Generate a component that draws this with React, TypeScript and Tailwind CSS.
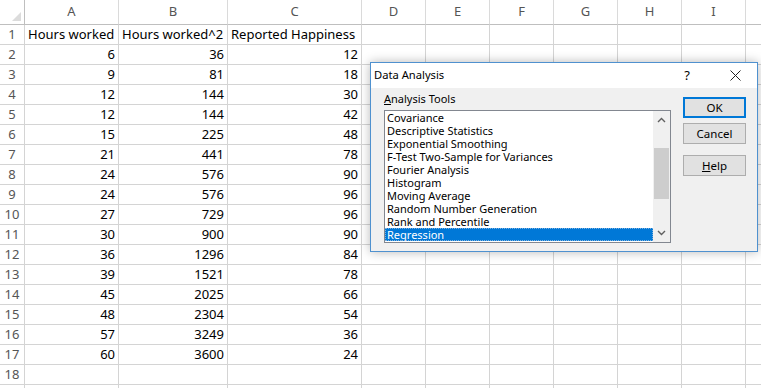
const widths = ['w-[94px]', 'w-[109px]', 'w-[134px]', 'w-[64px]', 'w-[64px]', 'w-[64px]', 'w-[64px]', 'w-[64px]', 'w-[64px]']
const letters = ['A', 'B', 'C', 'D', 'E', 'F', 'G', 'H', 'I']

const data = [
  [6, 36, 12], [9, 81, 18], [12, 144, 30], [12, 144, 42], [15, 225, 48],
  [21, 441, 78], [24, 576, 90], [24, 576, 96], [27, 729, 96], [30, 900, 90],
  [36, 1296, 84], [39, 1521, 78], [45, 2025, 66], [48, 2304, 54], [57, 3249, 36],
  [60, 3600, 24],
]

const tools = [
  'Covariance',
  'Descriptive Statistics',
  'Exponential Smoothing',
  'F-Test Two-Sample for Variances',
  'Fourier Analysis',
  'Histogram',
  'Moving Average',
  'Random Number Generation',
  'Rank and Percentile',
  'Regression',
]

function Row({ n, cells, right }: { n?: number; cells: (string | number)[]; right?: boolean }) {
  return (
    <div className="flex h-[20px]">
      <div className="w-[25px] shrink-0 border-r border-b border-[#d4d4d4] flex items-center justify-center text-[13px] text-[#555]">
        {n}
      </div>
      {widths.map((w, i) => (
        <div
          key={i}
          className={`${w} shrink-0 border-r border-b border-[#d4d4d4] flex items-center px-[3px] text-[13px] text-black whitespace-nowrap ${
            right ? 'justify-end' : 'justify-start'
          }`}
        >
          {cells[i] ?? ''}
        </div>
      ))}
      <div className="flex-1 border-b border-[#d4d4d4]" />
    </div>
  )
}

function Chevron({ up }: { up?: boolean }) {
  return (
    <svg width="9" height="6" viewBox="0 0 9 6" className="text-[#606060]">
      <path
        d={up ? 'M1 5 L4.5 1.5 L8 5' : 'M1 1 L4.5 4.5 L8 1'}
        fill="none"
        stroke="currentColor"
        strokeWidth="1.4"
      />
    </svg>
  )
}

function DataAnalysis() {
  return (
    <div className="absolute left-[370px] top-[62px] w-[388px] h-[190px] border border-[#4f91cf] bg-[#f0f0f0] shadow-[0_0_10px_rgba(0,0,0,0.28)] flex flex-col text-[11px] text-black">
      {/* Title bar */}
      <div className="h-[25px] bg-white flex items-center pl-[3px] shrink-0">
        <span className="text-[11.2px]">Data Analysis</span>
        <span className="ml-auto w-[16px] text-center text-[13px] mr-[35px]">?</span>
        <svg width="11" height="11" viewBox="0 0 11 11" className="mr-[16px]">
          <path d="M0.5 0.5 L10.5 10.5 M10.5 0.5 L0.5 10.5" stroke="#222" strokeWidth="1" />
        </svg>
      </div>

      {/* Body */}
      <div className="flex pl-[13px] pt-[4px]">
        <div className="w-[287px] flex flex-col">
          <div className="h-[13px] leading-[13px]">
            <span className="underline">A</span>nalysis Tools
          </div>
          <div className="mt-[5px] h-[133px] border border-[#828790] bg-white flex">
            <div className="flex-1">
              {tools.map((t) => (
                <div
                  key={t}
                  className={`h-[13px] leading-[13px] pl-[2px] whitespace-nowrap ${
                    t === 'Regression'
                      ? 'bg-[#0078d7] text-white outline-1 outline-dotted outline-[#7fb0dd] -outline-offset-1'
                      : ''
                  }`}
                >
                  {t}
                </div>
              ))}
            </div>
            <div className="w-[17px] bg-[#f0f0f0] flex flex-col items-center">
              <div className="h-[18px] flex items-center justify-center">
                <Chevron up />
              </div>
              <div className="mt-[19px] w-[15px] h-[51px] bg-[#cdcdcd]" />
              <div className="mt-auto h-[18px] flex items-center justify-center">
                <Chevron />
              </div>
            </div>
          </div>
        </div>

        <div className="ml-[12px] mt-[5px] w-[63px] flex flex-col">
          <button className="h-[21px] border-2 border-[#0078d7] bg-[#e1e1e1] text-[11.5px] leading-none">
            OK
          </button>
          <button className="mt-[5px] h-[21px] border border-[#adadad] bg-[#e1e1e1] text-[11.5px] leading-none">
            Cancel
          </button>
          <button className="mt-[11px] h-[21px] border border-[#adadad] bg-[#e1e1e1] text-[11.5px] leading-none">
            <span className="underline">H</span>elp
          </button>
        </div>
      </div>
    </div>
  )
}

export default function App() {
  return (
    <div className="relative w-[761px] h-[388px] overflow-hidden bg-white font-['Noto_Sans','Open_Sans',sans-serif]">
      {/* Column headers */}
      <div className="flex h-[25px]">
        <div className="w-[25px] shrink-0 border-r border-b border-[#bfbfbf] relative">
          <svg width="9" height="9" viewBox="0 0 9 9" className="absolute right-[3px] bottom-[3px]">
            <path d="M9 0 L9 9 L0 9 Z" fill="#dcdcdc" />
          </svg>
        </div>
        {widths.map((w, i) => (
          <div
            key={i}
            className={`${w} shrink-0 border-r border-b border-r-[#dadada] border-b-[#bfbfbf] flex items-center justify-center text-[13px] text-[#555]`}
          >
            {letters[i]}
          </div>
        ))}
        <div className="flex-1 border-b border-[#bfbfbf]" />
      </div>

      <Row n={1} cells={['Hours worked', 'Hours worked^2', 'Reported Happiness']} />
      {data.map((r, i) => (
        <Row key={i} n={i + 2} cells={r} right />
      ))}
      <Row n={18} cells={[]} />
      <Row cells={[]} />

      <DataAnalysis />
    </div>
  )
}
